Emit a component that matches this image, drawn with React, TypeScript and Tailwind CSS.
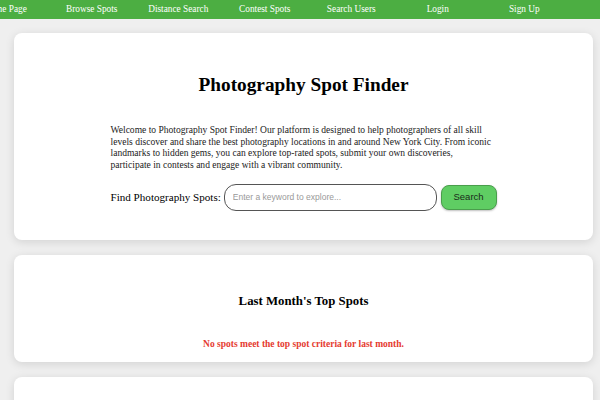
export default function App() {
  const links = ['Home Page', 'Browse Spots', 'Distance Search', 'Contest Spots', 'Search Users', 'Login', 'Sign Up']

  return (
    <div className="min-h-screen bg-[#efefef] overflow-hidden" style={{ fontFamily: '"Liberation Serif", "Times New Roman", serif' }}>
      {/* Nav */}
      <nav className="h-[19px] bg-[#4cae42] flex items-center overflow-hidden">
        <div className="flex shrink-0 -ml-[38px]">
          {links.map(l => (
            <a key={l} className="w-[86.5px] shrink-0 text-center text-[9.3px] text-white whitespace-nowrap">
              {l}
            </a>
          ))}
        </div>
      </nav>

      <div className="pl-[14px] pr-[7px] pt-[14px] flex flex-col gap-[15px]">
        {/* Hero */}
        <div className="bg-white rounded-lg shadow-[0_2px_10px_rgba(0,0,0,0.12)] pt-[40px] pb-[29px] flex flex-col items-center">
          <h1 className="text-[19.3px] leading-[23px] font-bold text-black">Photography Spot Finder</h1>
          <div className="w-[386px]">
            <p className="mt-[28px] w-[384px] text-[9.55px] leading-[11.7px] text-[#222]">
              Welcome to Photography Spot Finder! Our platform is designed to help photographers of all skill levels discover and share the best photography locations in and around New York City. From iconic landmarks to hidden gems, you can explore top-rated spots, submit your own discoveries, participate in contests and engage with a vibrant community.
            </p>
            <div className="mt-[13px] flex items-center">
              <span className="text-[11.1px] text-black whitespace-nowrap">Find Photography Spots:</span>
              <input
                placeholder="Enter a keyword to explore..."
                className="ml-[3px] w-[213px] h-[27px] rounded-[12px] border border-[#555] bg-white px-[8px] text-[8.5px] placeholder-[#999] outline-none"
                style={{ fontFamily: '"Liberation Sans", Arial, sans-serif' }}
              />
              <button
                className="ml-[4px] w-[56px] h-[25px] rounded-[8px] bg-[#5fcd63] border border-[#4a9e4c] shadow-[0_1px_2px_rgba(0,0,0,0.25)] text-[9.5px] text-[#1a2a1a]"
                style={{ fontFamily: '"Liberation Sans", Arial, sans-serif' }}
              >
                Search
              </button>
            </div>
          </div>
        </div>

        {/* Top spots */}
        <div className="bg-white rounded-lg shadow-[0_2px_10px_rgba(0,0,0,0.12)] pt-[38px] pb-[12px] flex flex-col items-center">
          <h2 className="text-[12.8px] leading-[16px] font-bold text-black">Last Month's Top Spots</h2>
          <p className="mt-[29px] text-[9.5px] leading-[12px] font-bold text-[#e53b2f]">
            No spots meet the top spot criteria for last month.
          </p>
        </div>

        <div className="bg-white rounded-lg shadow-[0_2px_10px_rgba(0,0,0,0.12)] h-[120px]" />
      </div>
    </div>
  )
}
